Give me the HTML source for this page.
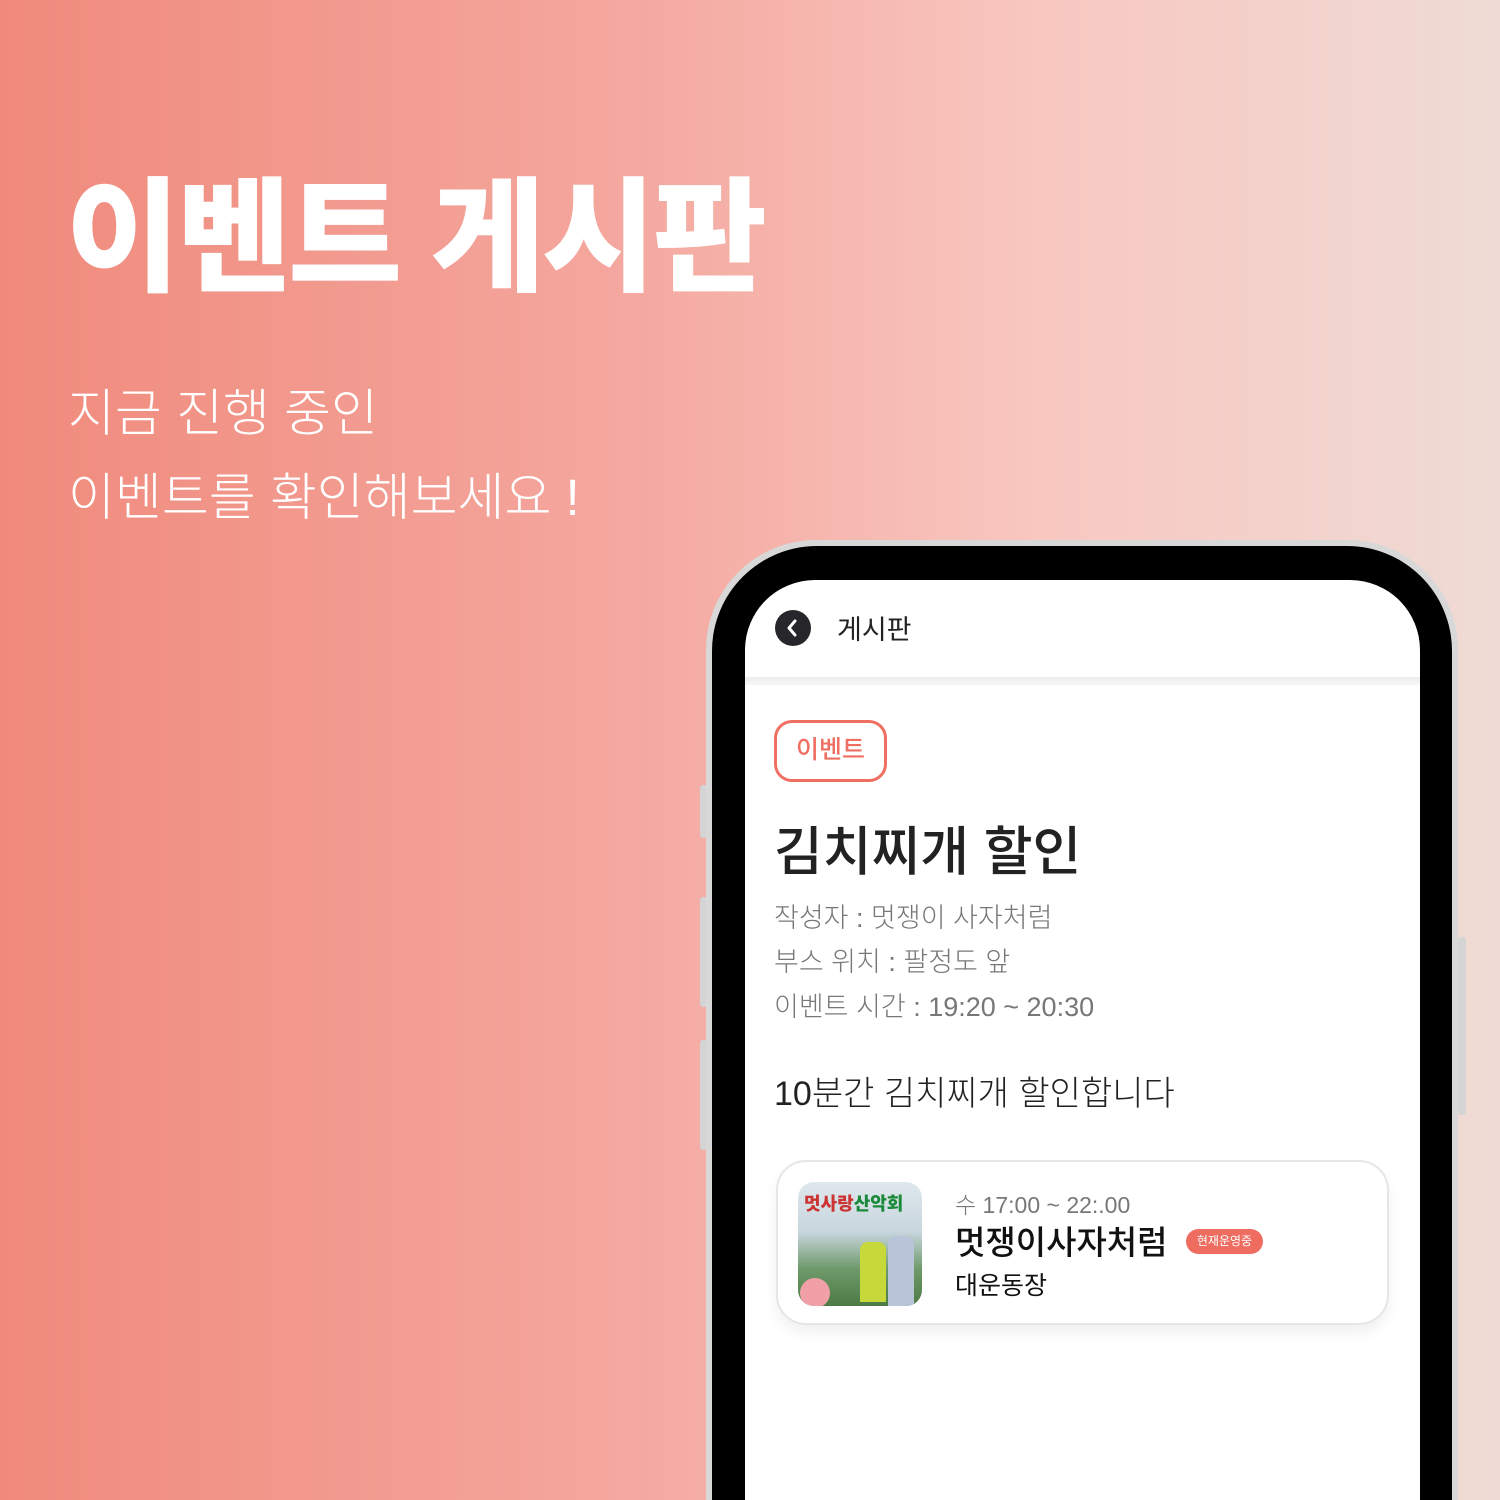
<!DOCTYPE html>
<html><head><meta charset="utf-8"><style>
*{margin:0;padding:0;box-sizing:border-box}
html,body{width:1500px;height:1500px;overflow:hidden}
body{position:relative;font-family:"Liberation Sans","Noto Sans CJK KR",sans-serif;background:linear-gradient(90deg,#f08a7c 0%,#f4a69d 40%,#f8c8c1 70%,#efdbd5 100%)}
.t{position:absolute;left:66px;top:166px;color:#fff;font-size:124px;font-weight:900;letter-spacing:-3px;line-height:146px}
.s{position:absolute;left:68px;top:372px;color:#fff;font-size:51px;font-weight:300;line-height:84px}
.frame{position:absolute;left:706px;top:540px;width:752px;height:960px;border-radius:110px 110px 0 0;background:#d8d8d8}
.bez{position:absolute;left:712px;top:546px;width:740px;height:954px;border-radius:105px 105px 0 0;background:#000}
.scr{position:absolute;left:745px;top:580px;width:675px;height:920px;border-radius:70px 70px 0 0;background:#fff;overflow:hidden}
.btn{position:absolute;background:#d4d4d4;width:8px;border-radius:3px}
.back{position:absolute;left:30px;top:30px;width:36px;height:36px;border-radius:50%;background:#27272b}
.hd{position:absolute;left:92px;top:28px;font-size:27px;color:#222}
.bar{position:absolute;left:0;top:97px;width:100%;height:8px;background:linear-gradient(#ececec,#f7f7f7)}
.tag{position:absolute;left:29px;top:140px;width:113px;height:62px;border:3px solid #ef6f62;border-radius:18px;color:#ef6f62;font-size:25px;text-align:center;line-height:54px;font-weight:500}
.h1{position:absolute;left:29px;top:230px;font-size:53px;font-weight:500;color:#222}
.m{position:absolute;left:29px;font-size:27px;color:#777;font-weight:300}
.b{position:absolute;left:29px;top:486px;font-size:34px;color:#222;font-weight:300}
.card{position:absolute;left:31px;top:580px;width:613px;height:165px;border:2px solid #e6e6e6;border-radius:30px;box-shadow:0 8px 14px rgba(0,0,0,.06);background:#fff}
.img{position:absolute;left:20px;top:20px;width:124px;height:124px;border-radius:16px;background:linear-gradient(#dfe8ec 0%,#c8d6de 40%,#6f9a6b 70%,#4d7a45 100%);overflow:hidden}
</style></head><body>
<div class="t">이벤트 게시판</div>
<div class="s">지금 진행 중인<br>이벤트를 확인해보세요 !</div>
<div class="btn" style="left:700px;top:785px;height:53px"></div>
<div class="btn" style="left:700px;top:897px;height:110px"></div>
<div class="btn" style="left:700px;top:1040px;height:110px"></div>
<div class="btn" style="left:1458px;top:937px;height:178px"></div>
<div class="frame"></div><div class="bez"></div>
<div class="scr">
<div class="back"><svg width="36" height="36"><path d="M20 11l-6 7 6 7" stroke="#fff" stroke-width="3" fill="none" stroke-linecap="round" stroke-linejoin="round"/></svg></div>
<div class="hd">게시판</div>
<div class="bar"></div>
<div class="tag">이벤트</div>
<div class="h1">김치찌개 할인</div>
<div class="m" style="top:316px">작성자 : 멋쟁이 사자처럼</div>
<div class="m" style="top:360px">부스 위치 : 팔정도 앞</div>
<div class="m" style="top:405px">이벤트 시간 : 19:20 ~ 20:30</div>
<div class="b">10분간 김치찌개 할인합니다</div>
<div class="card">
<div class="img"><div style="position:absolute;left:6px;top:8px;font-size:18px;font-weight:900;color:#c33">멋사랑<span style="color:#1a8a3a">산악회</span></div>
<div style="position:absolute;left:62px;top:60px;width:26px;height:60px;background:#c7d83a;border-radius:8px 8px 0 0"></div>
<div style="position:absolute;left:90px;top:54px;width:26px;height:70px;background:#b8c4d8;border-radius:8px 8px 0 0"></div>
<div style="position:absolute;left:2px;top:96px;width:30px;height:30px;background:#f2a0a8;border-radius:50%"></div></div>
<div style="position:absolute;left:177px;top:24px;font-size:23px;color:#777;font-weight:300">수 17:00 ~ 22:.00</div>
<div style="position:absolute;left:177px;top:54px;font-size:33px;color:#111;font-weight:500">멋쟁이사자처럼</div>
<div style="position:absolute;left:408px;top:67px;width:77px;height:25px;background:#ee6c60;border-radius:13px;color:#fff;font-size:12px;text-align:center;line-height:25px">현재운영중</div>
<div style="position:absolute;left:177px;top:104px;font-size:25px;color:#111">대운동장</div>
</div>
</div>
</body></html>
